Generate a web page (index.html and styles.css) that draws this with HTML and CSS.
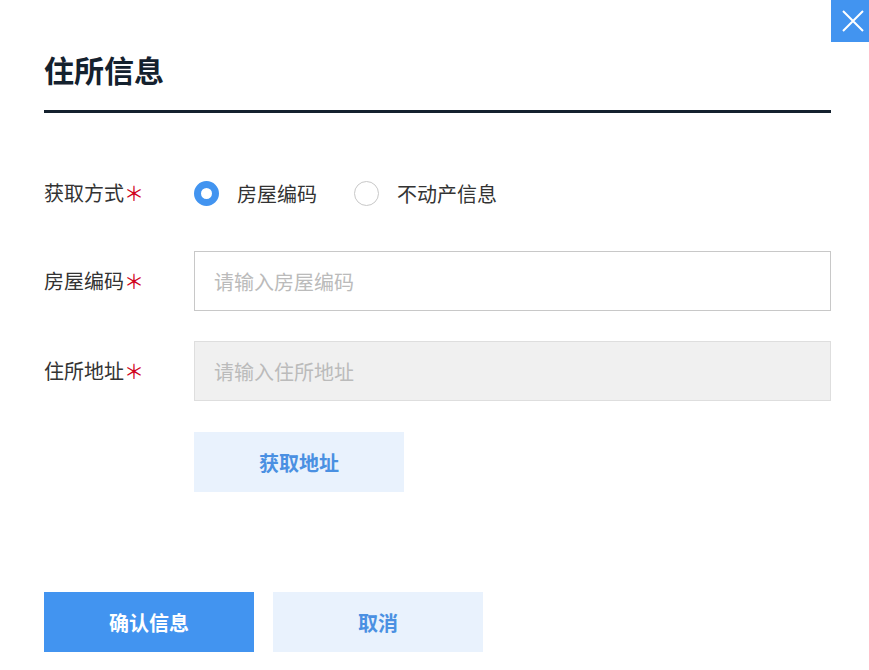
FILE: index.html
```html
<!DOCTYPE html>
<html lang="zh-CN">
<head>
<meta charset="utf-8">
<title>住所信息</title>
<link rel="stylesheet" href="styles.css">
</head>
<body>
<div class="dialog">
  <button class="close" aria-label="关闭">
    <svg width="22" height="22" viewBox="0 0 22 22"><path d="M1 1 L21 21 M21 1 L1 21" stroke="#fff" stroke-width="2" fill="none"/></svg>
  </button>
  <h1 class="title">住所信息</h1>
  <div class="form">
    <div class="row">
      <div class="label">获取方式<span class="req">＊</span></div>
      <div class="radios">
        <label class="radio"><span class="dot on"></span><span class="rtext">房屋编码</span></label>
        <label class="radio"><span class="dot"></span><span class="rtext">不动产信息</span></label>
      </div>
    </div>
    <div class="row">
      <div class="label">房屋编码<span class="req">＊</span></div>
      <div class="input">请输入房屋编码</div>
    </div>
    <div class="row">
      <div class="label">住所地址<span class="req">＊</span></div>
      <div class="input disabled">请输入住所地址</div>
    </div>
    <div class="row action">
      <button class="btn light">获取地址</button>
    </div>
  </div>
  <div class="footer">
    <button class="btn primary">确认信息</button>
    <button class="btn light">取消</button>
  </div>
</div>
</body>
</html>
```
FILE: styles.css
```css
* { box-sizing: border-box; }
html, body { margin: 0; padding: 0; background: #fff; }
body {
  font-family: "Noto Sans CJK SC", "Noto Sans", sans-serif;
  width: 869px;
  height: 670px;
  overflow: hidden;
}
.dialog {
  position: relative;
  padding: 0 38px 0 44px;
}
.close {
  position: absolute;
  top: 0;
  right: 0;
  width: 38px;
  height: 42px;
  border: 0;
  padding: 0 0 0 5px;
  background: #4294f0;
  display: flex;
  align-items: center;
  justify-content: center;
}
.title {
  margin: 0;
  padding: 51px 0 23px;
  height: 113px;
  line-height: 36px;
  font-size: 30px;
  font-weight: 700;
  color: #14212e;
  border-bottom: 3px solid #14212e;
}
.form {
  display: flex;
  flex-direction: column;
  gap: 30px;
  margin-top: 50px;
}
.row {
  display: flex;
  align-items: center;
  height: 60px;
}
.row:first-child { margin-bottom: -2px; }
.label {
  width: 150px;
  flex: none;
  font-size: 20px;
  color: #333;
  line-height: 28px;
  white-space: nowrap;
}
.req {
  color: #d0021b;
  font-size: 20px;
}
.radios {
  display: flex;
  align-items: center;
  gap: 37px;
}
.radio {
  display: flex;
  align-items: center;
  gap: 18px;
  font-size: 20px;
  color: #333;
}
.dot {
  width: 25px;
  height: 25px;
  border-radius: 50%;
  border: 1px solid #c8c8c8;
  background: #fff;
}
.dot.on {
  border: 7px solid #4294f0;
}
.input {
  flex: 1;
  height: 60px;
  border: 1px solid #c8c8c8;
  padding: 0 19px;
  display: flex;
  align-items: center;
  font-size: 20px;
  color: #bbb;
}
.input.disabled {
  background: #f0f0f0;
  border-color: #dedede;
}
.action {
  padding-left: 150px;
  margin-top: 1px;
}
.btn {
  width: 210px;
  height: 60px;
  border: 0;
  padding: 0;
  font-family: inherit;
  font-size: 20px;
  font-weight: 700;
}
.btn.light {
  background: #e9f2fd;
  color: #4a90e2;
}
.btn.primary {
  background: #4294f0;
  color: #fff;
}
.footer {
  display: flex;
  gap: 19px;
  margin-top: 100px;
}
```
